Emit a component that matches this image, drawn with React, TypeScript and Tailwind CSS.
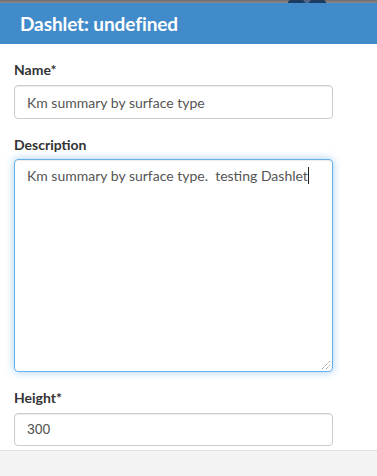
import React from "react";

export default function App() {
  return (
    <div className="w-[377px] h-[476px] overflow-hidden bg-white flex flex-col" style={{ fontFamily: "Lato, 'Open Sans', sans-serif" }}>
      <div className="h-[3px] bg-gradient-to-b from-[#6f6f6f] to-[#8a8a8a] flex shrink-0">
        <div className="w-[288px]" />
        <div className="w-[17px] bg-[#1d3a60] rounded-t-sm" />
        <div className="w-[4px] bg-[#4a6a90]" />
        <div className="w-[17px] bg-[#1d3a60] rounded-t-sm" />
      </div>
      <div className="h-[41px] bg-[#428bca] px-5 flex items-center shrink-0">
        <span className="text-white font-bold text-[19px] leading-none tracking-[-0.1px]">Dashlet: undefined</span>
      </div>
      <div className="flex-1 px-[14px] pt-4 flex flex-col">
        <label className="text-[14px] leading-5 font-bold text-[#333] mb-[5px]">Name*</label>
        <div className="w-[319px] h-[34px] border border-[#ccc] rounded-[4px] px-3 flex items-center text-[14px] text-[#555] shadow-[inset_0_1px_1px_rgba(0,0,0,0.075)]">
          Km summary by surface type
        </div>
        <label className="mt-4 text-[14px] leading-5 font-bold text-[#333] mb-[4px]">Description</label>
        <div className="relative w-[319px] h-[213px] border border-[#66afe9] rounded-[4px] px-3 pt-[6px] text-[14px] leading-5 text-[#555] shadow-[inset_0_1px_1px_rgba(0,0,0,0.075),0_0_8px_rgba(102,175,233,0.6)]">
          <span className="whitespace-pre">Km summary by surface type.  testing Dashlet</span>
          <span className="inline-block w-px h-[17px] bg-[#222] align-[-3px]" />
          <svg className="absolute right-[2px] bottom-[2px]" width="9" height="9" viewBox="0 0 9 9">
            <line x1="1" y1="9" x2="9" y2="1" stroke="#777" strokeWidth="1" strokeDasharray="1 1" />
            <line x1="5" y1="9" x2="9" y2="5" stroke="#777" strokeWidth="1" strokeDasharray="1 1" />
          </svg>
        </div>
        <label className="mt-4 text-[14px] leading-5 font-bold text-[#333] mb-[5px]">Height*</label>
        <div className="w-[319px] h-[33px] border border-[#ccc] rounded-[4px] px-3 flex items-center text-[14px] text-[#555] shadow-[inset_0_1px_1px_rgba(0,0,0,0.075)]" style={{ fontFamily: "'Liberation Sans', Arial, sans-serif" }}>
          300
        </div>
      </div>
      <div className="h-[26px] shrink-0 bg-[#f3f3f3] border-t border-[#e2e2e2]" />
    </div>
  );
}
